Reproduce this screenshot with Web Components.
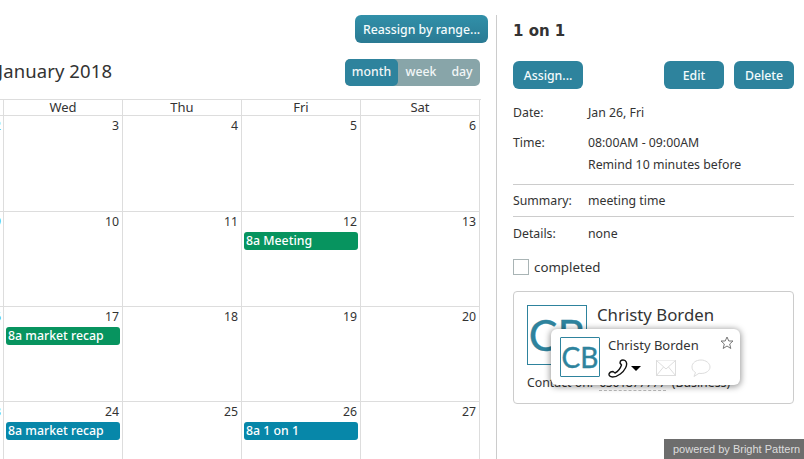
<!DOCTYPE html>
<html><head><meta charset="utf-8"><style>
html,body{margin:0;padding:0;background:#fff;height:100%;overflow:hidden}
body{font-family:"Noto Sans","DejaVu Sans",sans-serif;color:#333}
</style></head><body>
<app-shell></app-shell>
<script>
function def(name,css,html,init){customElements.define(name,class extends HTMLElement{connectedCallback(){if(this.shadowRoot)return;const r=this.attachShadow({mode:'open'});r.innerHTML='<style>'+css+'</style>'+html(this);if(init)init(this,r)}})}
const F='"Noto Sans","DejaVu Sans",sans-serif';
def('ui-btn',`:host{display:inline-flex;flex:none;align-items:center;justify-content:center;box-sizing:border-box;height:28px;border-radius:6px;background:#2e839d;color:#f4fbfc;font:500 12.3px ${F};white-space:nowrap}`,()=>'<slot></slot>');
def('cal-event',`:host{display:block;height:18px;margin:0 2px;border-radius:3px;color:#fff;font:500 12.3px/17px ${F};padding-left:2px;white-space:nowrap;overflow:hidden}`,()=>'<slot></slot>');
const weeks=[[2,3,4,5,6],[9,10,11,12,13],[16,17,18,19,20],[23,24,25,26,27]];
const ev={12:['8a Meeting','#07945f'],17:['8a market recap','#07945f'],24:['8a market recap','#0787a9'],26:['8a 1 on 1','#0787a9']};
def('cal-grid',`:host{display:block;margin-left:-115px;width:596px;font:12.3px ${F};color:#333}
.g{display:grid;grid-template-columns:repeat(5,119px);grid-template-rows:16px 96px 95px 95px 95px;border-top:1px solid #ddd;box-sizing:border-box;width:596px}
.h{border-right:1px solid #ddd;border-bottom:1px solid #ddd;text-align:center;line-height:15px;font-weight:400;font-size:13px}
.c{border-right:1px solid #ddd;border-bottom:1px solid #ddd;box-sizing:border-box;min-width:0}
.n{text-align:right;padding-right:3px;line-height:19px;height:20px}
.t{color:#2a9de0;padding-right:2px}`,()=>{
 let s='<div class="g">';['Tue','Wed','Thu','Fri','Sat'].forEach(d=>s+=`<div class="h">${d}</div>`);
 weeks.forEach(w=>w.forEach((d,i)=>{const e=ev[d];s+=`<div class="c"><div class="n ${i==0?'t':''}">${d}</div>${e?`<cal-event style="background:${e[1]}">${e[0]}</cal-event>`:''}</div>`}));
 return s+'</div>'});
def('cal-tabs',`:host{display:inline-flex;height:27px;border-radius:5px;background:#88a5a9;color:#f2f6f7;font:500 12.3px/26px ${F};overflow:hidden}
span{text-align:center}.a{background:#2e839d;border-radius:5px;width:53px}.w{width:46px}.d{width:36px}`,()=>'<span class="a">month</span><span class="w">week</span><span class="d">day</span>');
def('cal-pane',`:host{display:block;width:496px;height:459px;overflow:hidden;box-sizing:border-box;flex:none}
.top{display:flex;justify-content:flex-end;padding:15px 8px 0 0}
.top ui-btn{width:133px;background:linear-gradient(#3190a9,#2a7a93);height:28px}
.bar{display:flex;justify-content:space-between;align-items:center;margin-top:16px;padding-right:16px;height:27px;margin-bottom:13px}
h1{font:400 18.5px ${F};margin:0 0 0 -2px;color:#333;position:relative;top:-2px;letter-spacing:.1px}`,()=>`<div class="top"><ui-btn>Reassign by range...</ui-btn></div>
<div class="bar"><h1>January 2018</h1><cal-tabs></cal-tabs></div><cal-grid></cal-grid>`);
def('kv-row',`:host{display:grid;grid-template-columns:75px 1fr;font:12.3px/22px ${F};color:#333}`,()=>'<span><slot name="k"></slot></span><span><slot></slot></span>');
def('phone-icon',`:host{display:inline-block;line-height:0}`,()=>`<svg width="20" height="19" viewBox="0 0 20 19" fill="none" stroke="#111" stroke-width="1.4" stroke-linejoin="round"><path d="M12.500 2C13.500 1 15.500.7 17 1.500 19 3 19 6 17.500 9 15.500 13 10 18 4.500 18 2 18 .8 16.500 1 15c.5-1.500 2.500-2.500 4-2.500l2 1.500c3-1.500 5.500-5 6.500-8l-1.500-2z"/></svg>`);
def('hover-card',`:host{position:absolute;left:551px;top:329px;width:189px;height:56px;background:#fff;border-radius:6px;box-shadow:0 1px 6px 1px rgba(0,0,0,.4);display:flex;box-sizing:border-box;padding:8px 0 0 9px}
.av{width:38px;height:38px;border:1px solid #2e839d;color:#2e839d;font:400 28px/38px Lato,sans-serif;-webkit-text-stroke:.4px #2e839d;text-align:center;border-radius:1px;flex:none}
.r{margin-left:8px;flex:1}.nm{font:13px/16px "Noto Sans",sans-serif;color:#333}
.ic{display:flex;align-items:center;margin-top:4px;height:22px}
.ar{width:0;height:0;border:5px solid transparent;border-top:5px solid #000;border-bottom:0;margin:0 0 0 3px}
svg.m{margin-left:15px}svg.b{margin-left:15px}
.s{position:absolute;right:6px;top:7px}`,()=>`<div class="av">CB</div><div class="r"><div class="nm">Christy Borden</div><div class="ic"><phone-icon></phone-icon><i class="ar"></i>
<svg class="m" width="20" height="17" viewBox="0 0 20 17" fill="#fff" stroke="#ddd"><rect x=".5" y=".5" width="19" height="15"/><path d="M.5 .5 10 9 19.500 .5M.5 15.500 7.500 7M19.500 15.500 12.500 7"/></svg>
<svg class="b" width="20" height="19" viewBox="0 0 20 19" fill="#fff" stroke="#ddd"><path d="M10 1C5 1 1 3.800 1 8c0 2.500 1.500 4.500 3.500 5.500L3 17.500l5-3.200c.7.1 1.300.2 2 .2 5 0 9-2.900 9-6.500S15 1 10 1z"/></svg></div></div>
<svg class="s" width="14" height="14" viewBox="0 0 14 14" fill="none" stroke="#777"><path d="M7 1l1.800 4h4.200L9.700 8l1.100 4.500L7 10l-3.800 2.500L4.300 8 1 5h4.200z"/></svg>`);
def('contact-card',`:host{display:block;position:relative;box-sizing:border-box;height:113px;border:1px solid #ccc;border-radius:4px;margin-top:16px}
.av{position:absolute;left:13px;top:13px;width:58px;height:58px;border:1px solid #2e839d;color:#2e839d;font:400 43px/58px Lato,sans-serif;-webkit-text-stroke:.4px #2e839d;text-align:center;overflow:hidden}
.n{position:absolute;left:83px;top:13px;font:400 16.8px/20px "Noto Sans",sans-serif;color:#333;white-space:nowrap}
.c{position:absolute;left:13px;top:83px;font:12.3px/16px ${F};white-space:nowrap}
u{display:inline-block;line-height:14px;text-decoration:none;border-bottom:1px dashed #bbb;letter-spacing:-.4px;margin:0 3px}`,()=>`<div class="av">CB</div><div class="n">Christy Borden</div><div class="c">Contact on: <u>6501877777</u> (Business)</div>`);
def('detail-pane',`:host{display:block;box-sizing:border-box;width:307px;flex:none;padding:0 10px 0 16px;font:12.3px ${F};color:#333}
h2{font:700 15px/20px "DejaVu Sans",sans-serif;margin:0;padding-top:21px;height:20px;margin-bottom:20px}
.b{display:flex;gap:10px;margin-bottom:13px}.b ui-btn{width:60px}.b ui-btn:first-child{width:70px;margin-right:71px}
hr{border:0;border-top:1px solid #ccc;margin:0}
.cb{display:flex;align-items:center;gap:5px;margin-top:14px;font-size:13.3px;line-height:16px}
i{display:block;width:14px;height:14px;border:1px solid #a9b4b5}`,()=>`<h2>1 on 1</h2>
<div class="b"><ui-btn>Assign...</ui-btn><ui-btn>Edit</ui-btn><ui-btn>Delete</ui-btn></div>
<kv-row style="margin-bottom:8px"><span slot="k">Date:</span>Jan 26, Fri</kv-row>
<kv-row><span slot="k">Time:</span>08:00AM - 09:00AM</kv-row>
<kv-row style="margin-bottom:8px"><span slot="k"></span>Remind 10 minutes before</kv-row><hr>
<kv-row style="margin:5px 0 4px"><span slot="k">Summary:</span>meeting time</kv-row><hr>
<kv-row style="margin-top:6px"><span slot="k">Details:</span>none</kv-row>
<div class="cb"><i></i>completed</div><contact-card></contact-card>`);
def('app-shell',`:host{display:flex;width:804px;height:459px;position:relative;overflow:hidden}
.d{width:1px;background:#ccc;margin-top:15px;flex:none}
.p{position:absolute;left:664px;top:439px;width:140px;height:20px;background:#6d6d6d;color:#ddd;font:11px/20px "Liberation Sans",sans-serif;padding-left:9px;box-sizing:border-box;white-space:nowrap}`,()=>`<cal-pane></cal-pane><div class="d"></div><detail-pane></detail-pane><hover-card></hover-card><div class="p">powered by Bright Pattern</div>`);
</script></body></html>
